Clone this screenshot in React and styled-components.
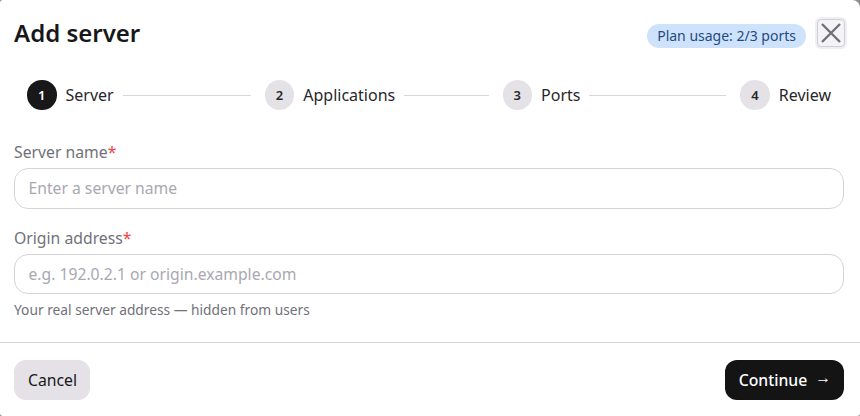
import React from "react";
import styled, { createGlobalStyle } from "styled-components";

const GlobalStyle = createGlobalStyle`
    html, body {
        margin: 0;
        height: 100%;
        background: #8f8f8f;
    }
    body {
        font-family: "Noto Sans", "Liberation Sans", sans-serif;
        color: #18181b;
    }
`;

const Modal = styled.div`
    width: 860px;
    height: 416px;
    display: flex;
    flex-direction: column;
    background: #fff;
    border-radius: 3px 8px 3px 3px;
    overflow: hidden;
`;
const Header = styled.header`
    display: flex;
    align-items: center;
    justify-content: space-between;
    height: 66px;
    padding: 0 15px 0 14px;
`;
const Title = styled.h2`
    margin: 0;
    font-size: 24px;
    font-weight: 600;
    line-height: 32px;
    color: #18181b;
`;
const HeaderRight = styled.div`
    display: flex;
    align-items: center;
    gap: 11px;
`;
const Badge = styled.span`
    display: inline-flex;
    align-items: center;
    height: 24px;
    margin-top: 5px;
    padding: 0 10px;
    border-radius: 12px;
    background: #cfe2fb;
    color: #1e4a84;
    font-size: 14px;
    font-weight: 400;
`;
const CloseButton = styled.button`
    display: flex;
    align-items: center;
    justify-content: center;
    width: 28px;
    height: 28px;
    padding: 0;
    border: 1px solid #cfcfd4;
    border-radius: 4px;
    background: #f4f4f6;
    box-shadow: 0 0 0 2px #efeff2;
    color: #71717a;
`;
const Stepper = styled.ol`
    display: flex;
    align-items: center;
    margin: 0;
    padding: 0 29px 0 27px;
    height: 58px;
    list-style: none;
`;
const Step = styled.li`
    flex: ${(p) => (p.$last ? "none" : "1")};
    display: flex;
    align-items: center;
    gap: 9px;
    padding-right: ${(p) => (p.$last ? "0" : "14px")};
    font-size: 16px;
    color: #27272a;
`;
const StepNumber = styled.span`
    display: flex;
    align-items: center;
    justify-content: center;
    flex: none;
    width: 29.5px;
    height: 29.5px;
    border-radius: 50%;
    font-size: 13px;
    font-weight: 600;
    background: ${(p) => (p.$active ? "#18181b" : "#e4e2e7")};
    color: ${(p) => (p.$active ? "#fff" : "#27272a")};
`;
const StepLine = styled.span`
    flex: 1;
    height: 1px;
    background: #d8d6dc;
`;
const Form = styled.div`
    flex: 1;
    display: flex;
    flex-direction: column;
    gap: 19.4px;
    padding: 18.4px 16px 0 14px;
`;
const Field = styled.div`
    display: flex;
    flex-direction: column;
`;
const Label = styled.label`
    font-size: 15.75px;
    line-height: 20px;
    margin-bottom: 6px;
    color: #71717a;
`;
const Required = styled.span`
    color: #ef4444;
`;
const Input = styled.input`
    box-sizing: border-box;
    width: 100%;
    height: 40.2px;
    padding: 0 13.5px;
    border: 1px solid #d4d4d8;
    border-radius: 14px;
    background: #fff;
    font-family: inherit;
    font-size: 15.7px;
    color: #18181b;
    outline: none;
    &::placeholder {
        color: #a9a8b2;
        opacity: 1;
    }
`;
const Hint = styled.p`
    margin: 6.6px 0 0;
    font-size: 13.75px;
    line-height: 18px;
    color: #71717a;
`;
const Footer = styled.footer`
    display: flex;
    align-items: center;
    justify-content: space-between;
    height: 74px;
    box-sizing: border-box;
    padding: 1px 16px 0 14px;
    border-top: 1px solid #d4d4d8;
`;
const Button = styled.button`
    display: flex;
    align-items: center;
    gap: 8px;
    height: 40px;
    padding: 0 13px 0 14px;
    border: none;
    border-radius: 12px;
    font-family: inherit;
    font-size: 15.75px;
    font-weight: ${(p) => (p.$primary ? 500 : 400)};
    background: ${(p) => (p.$primary ? "#141414" : "#e4e2e7")};
    color: ${(p) => (p.$primary ? "#fff" : "#18181b")};
`;
const Arrow = styled.span`
    font-family: "Liberation Sans", sans-serif;
    font-weight: 400;
    position: relative;
    top: -2px;
`;

const steps = ["Server", "Applications", "Ports", "Review"];

export default function App() {
    return (
        <>
            <GlobalStyle />
            <Modal>
                <Header>
                    <Title>Add server</Title>
                    <HeaderRight>
                        <Badge>Plan usage: 2/3 ports</Badge>
                        <CloseButton aria-label="Close">
                            <svg width="24" height="24" viewBox="0 0 24 24" fill="none" stroke="currentColor" strokeWidth="2.4">
                                <path d="M3 3l18 18M21 3L3 21" />
                            </svg>
                        </CloseButton>
                    </HeaderRight>
                </Header>
                <Stepper>
                    {steps.map((name, i) => (
                        <Step key={name} $last={i === steps.length - 1}>
                            <StepNumber $active={i === 0}>{i + 1}</StepNumber>
                            {name}
                            {i < steps.length - 1 && <StepLine />}
                        </Step>
                    ))}
                </Stepper>
                <Form>
                    <Field>
                        <Label>Server name<Required>*</Required></Label>
                        <Input placeholder="Enter a server name" />
                    </Field>
                    <Field>
                        <Label>Origin address<Required>*</Required></Label>
                        <Input placeholder="e.g. 192.0.2.1 or origin.example.com" />
                        <Hint>Your real server address — hidden from users</Hint>
                    </Field>
                </Form>
                <Footer>
                    <Button>Cancel</Button>
                    <Button $primary>Continue<Arrow>→</Arrow></Button>
                </Footer>
            </Modal>
        </>
    );
}
